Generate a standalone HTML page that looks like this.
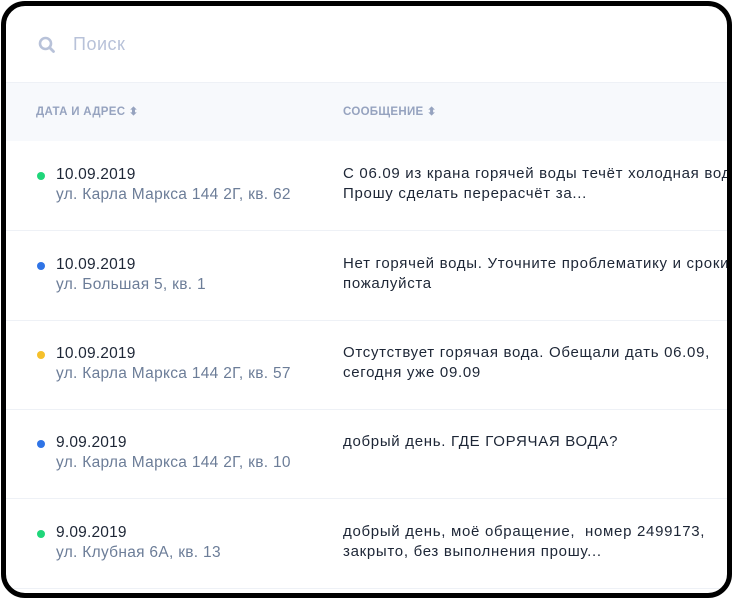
<!DOCTYPE html>
<html><head><meta charset="utf-8"><style>
html,body{margin:0;padding:0;background:#fff;width:733px;height:600px;overflow:hidden}
.f{position:absolute;left:1px;top:1px;width:721px;height:587px;border:5px solid #000;border-radius:24px;overflow:hidden;background:#fff;font-family:"Liberation Sans",sans-serif}
.s{position:absolute;left:0;top:0;width:100%;height:76px;border-bottom:1px solid #eef1f6}
.s span{position:absolute;left:67px;top:28px;font-size:18px;color:#b8c2d9;letter-spacing:.5px}
.h{position:absolute;left:0;top:77px;width:100%;height:58px;background:#f7f9fc}
.h span{position:absolute;top:22px;font-size:11.5px;font-weight:bold;color:#96a3bf;letter-spacing:.3px}
.r{position:absolute;left:0;width:100%;height:89px;border-bottom:1px solid #eef1f6}
.d{position:absolute;left:31px;top:31px;width:8px;height:8px;border-radius:50%}
.dt{position:absolute;left:50px;top:25px;font-size:15.5px;color:#1d2636;letter-spacing:.2px}
.ad{position:absolute;left:50px;top:45px;font-size:15.5px;color:#6c7d98;letter-spacing:.3px}
.m{position:absolute;left:337px;top:23px;font-size:15px;line-height:20px;color:#1d2636;white-space:nowrap;letter-spacing:.7px}
</style></head><body><div class="f">
<div class="s"><svg style="position:absolute;left:32px;top:30px" width="18" height="18" viewBox="0 0 18 18"><circle cx="7.5" cy="7.5" r="5.5" fill="none" stroke="#b8c2d9" stroke-width="2.6"/><path d="M11.5 11.5L15.5 15.5" stroke="#b8c2d9" stroke-width="2.8" stroke-linecap="round"/></svg><span>Поиск</span></div>
<div class="h"><span style="left:30px">ДАТА И АДРЕС <span style="position:static;font-size:11px">⬍</span></span><span style="left:337px">СООБЩЕНИЕ <span style="position:static;font-size:11px">⬍</span></span></div>
<div class="r" style="top:135px"><i class="d" style="background:#1fd67a"></i><div class="dt">10.09.2019</div><div class="ad">ул. Карла Маркса 144 2Г, кв. 62</div><div class="m">С 06.09 из крана горячей воды течёт холодная вода<br>Прошу сделать перерасчёт за...</div></div>
<div class="r" style="top:225px"><i class="d" style="background:#2f74e6"></i><div class="dt">10.09.2019</div><div class="ad">ул. Большая 5, кв. 1</div><div class="m">Нет горячей воды. Уточните проблематику и сроки<br>пожалуйста</div></div>
<div class="r" style="top:314px"><i class="d" style="background:#f5c02b"></i><div class="dt">10.09.2019</div><div class="ad">ул. Карла Маркса 144 2Г, кв. 57</div><div class="m">Отсутствует горячая вода. Обещали дать 06.09,<br>сегодня уже 09.09</div></div>
<div class="r" style="top:403px"><i class="d" style="background:#2f74e6"></i><div class="dt">9.09.2019</div><div class="ad">ул. Карла Маркса 144 2Г, кв. 10</div><div class="m">добрый день. ГДЕ ГОРЯЧАЯ ВОДА?</div></div>
<div class="r" style="top:493px"><i class="d" style="background:#1fd67a"></i><div class="dt">9.09.2019</div><div class="ad">ул. Клубная 6А, кв. 13</div><div class="m">добрый день, моё обращение,&nbsp; номер 2499173,<br>закрыто, без выполнения прошу...</div></div>
</div></body></html>
